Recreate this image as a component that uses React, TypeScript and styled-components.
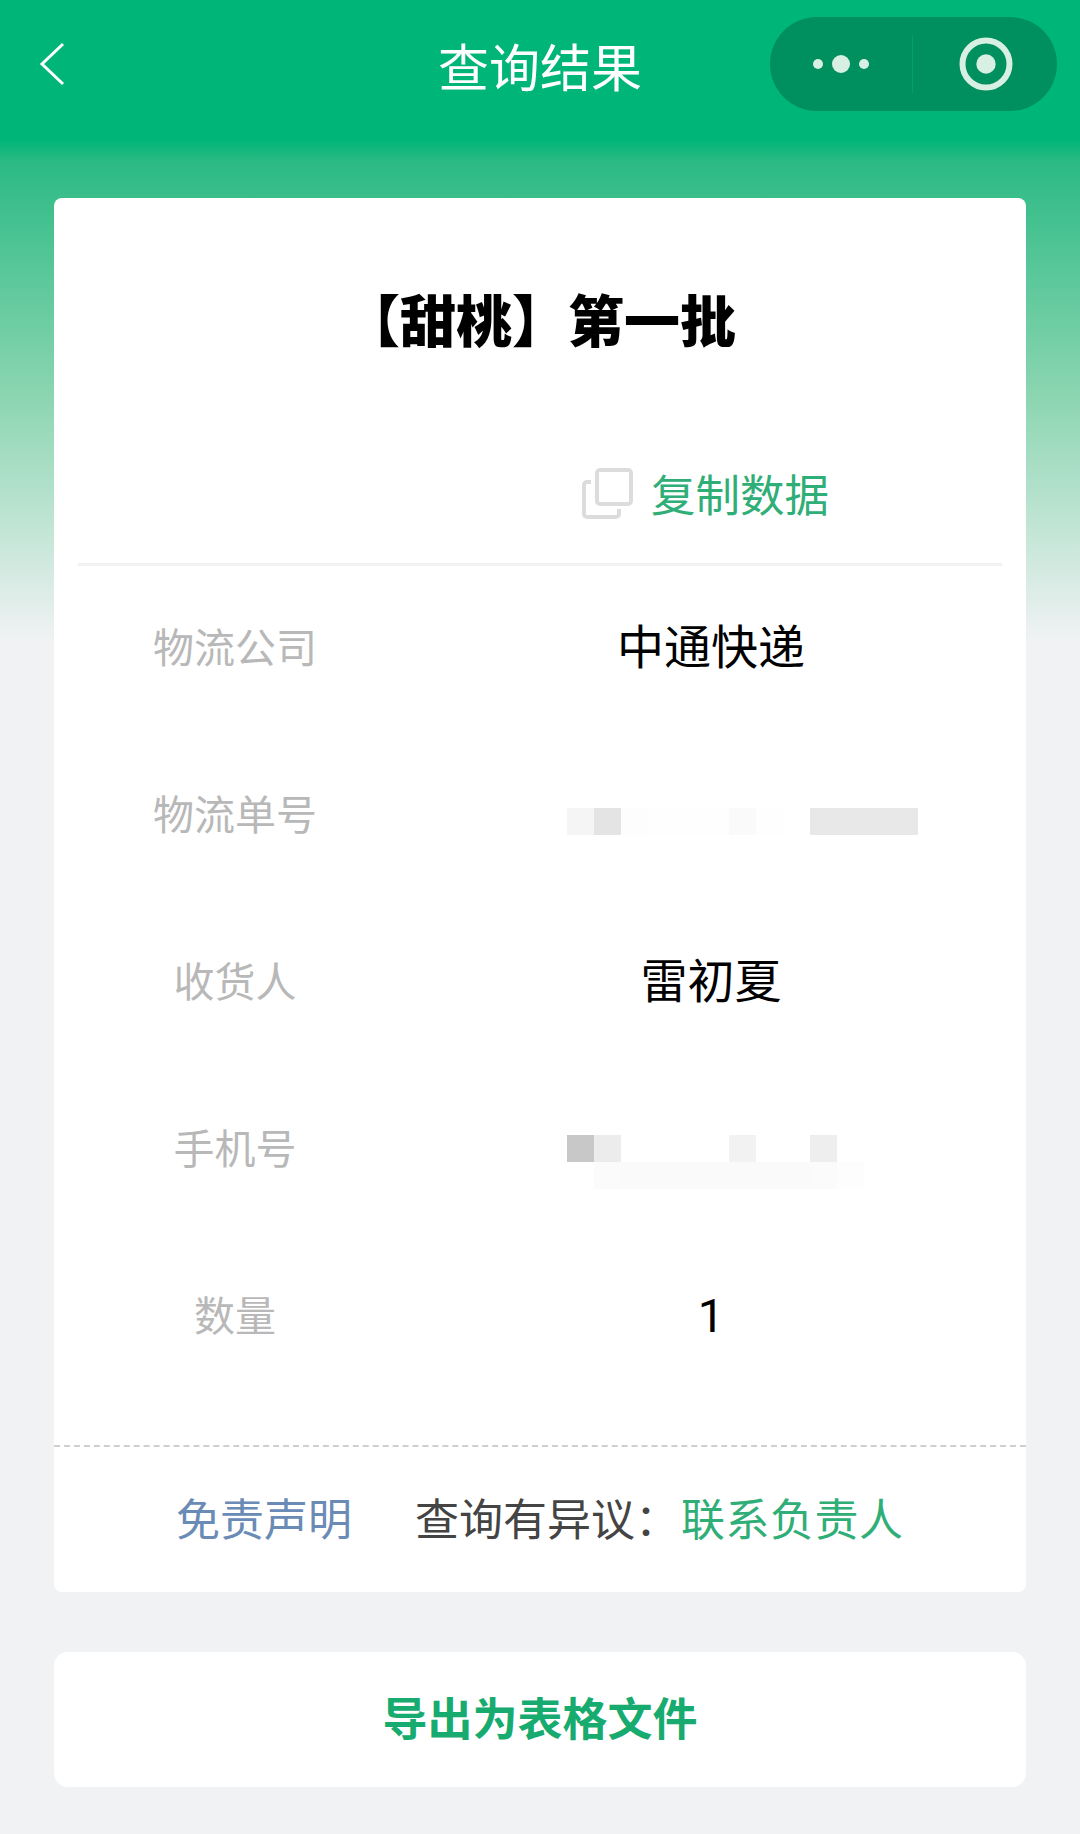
import React from "react";
import styled, { createGlobalStyle } from "styled-components";

const GlobalStyle = createGlobalStyle`
  html, body {
    margin: 0;
    padding: 0;
    background: #f0f2f4;
  }
  * {
    box-sizing: border-box;
  }
`;

const Page = styled.div`
  width: 1080px;
  height: 1834px;
  overflow: hidden;
  font-family: "Noto Sans CJK SC", "Noto Sans", sans-serif;
  background: linear-gradient(
    180deg,
    #00b578 0,
    #00b578 140px,
    #2cba84 162px,
    #8dd6b2 400px,
    #f0f2f4 640px
  );
`;
const NavBar = styled.div`
  display: grid;
  grid-template-columns: 1fr auto 1fr;
  align-items: center;
  height: 128px;
  padding: 0 23px;
`;
const BackButton = styled.div`
  display: flex;
  align-items: center;
  padding-left: 16px;
`;
const NavTitle = styled.div`
  font-size: 51px;
  color: #fff;
  line-height: 1;
  margin-top: 2px;
`;
const Capsule = styled.div`
  justify-self: end;
  display: flex;
  align-items: center;
  width: 287px;
  height: 94px;
  border-radius: 47px;
  background: #008f5f;
`;
const CapsuleCell = styled.div<{ $nudge?: number }>`
  flex: 1;
  display: flex;
  align-items: center;
  justify-content: center;
  padding-left: ${(p) => p.$nudge ?? 0}px;
`;
const CapsuleLine = styled.div`
  width: 1px;
  height: 57px;
  background: #00a06a;
`;
const Card = styled.div`
  margin: 0 54px;
  background: #fff;
  border-radius: 8px;
`;
const MainCard = styled(Card)`
  margin-top: 70px;
  height: 1394px;
  display: flex;
  flex-direction: column;
`;
const CardTitle = styled.div`
  margin-top: 87px;
  height: 66px;
  line-height: 66px;
  text-align: center;
  font-size: 56px;
  font-weight: 900;
  color: #000;
`;
const CopyRow = styled.div`
  margin: 110px 24px 0;
  height: 105px;
  padding: 0 0 40px 504px;
  display: flex;
  align-items: center;
  gap: 17px;
  border-bottom: 3px solid #f2f2f2;
`;
const CopyGlyph = styled.svg`
  margin-top: 2px;
`;
const CopyText = styled.span`
  font-size: 44.5px;
  color: #2fae77;
`;
const Rows = styled.div`
  flex: 1;
  display: flex;
  flex-direction: column;
  gap: 10px;
`;
const Row = styled.div`
  height: 157px;
  display: grid;
  grid-template-columns: 362px 590px;
  align-items: center;
  text-align: center;
`;
const Label = styled.div`
  font-size: 41px;
  color: #b8b8b8;
`;
const Value = styled.div`
  font-family: Roboto, "Noto Sans CJK SC", sans-serif;
  font-size: 47px;
  line-height: 68px;
  margin-top: 7px;
  color: #000;
`;
const Mosaic = styled.div<{ $drop: number }>`
  display: grid;
  grid-template-columns: repeat(13, 27px);
  grid-auto-rows: 27px;
  width: 351px;
  margin-left: 151px;
  margin-top: ${(p) => p.$drop}px;
`;
const MosaicCell = styled.div<{ $shade: string }>`
  background: ${(p) => p.$shade};
`;
const Footer = styled.div`
  height: 147px;
  border-top: 2px dashed #cfcfcf;
  display: flex;
  align-items: center;
  padding: 0 0 6px 122px;
  font-size: 44px;
  white-space: nowrap;
`;
const Disclaimer = styled.span`
  color: #6a8bb5;
  margin-right: 63px;
`;
const Question = styled.span`
  color: #444;
  margin-right: 2px;
`;
const Contact = styled.span`
  color: #2fae77;
  letter-spacing: 0.5px;
`;
const ExportButton = styled(Card)`
  margin-top: 60px;
  height: 135px;
  padding-bottom: 7px;
  border-radius: 14px;
  display: flex;
  align-items: center;
  justify-content: center;
  font-size: 45px;
  font-weight: 700;
  color: #17ab70;
`;

const _ = "#fff";
const trackingCells = [
  "#f5f5f5", "#e4e4e4", "#fdfdfd", "#fefefe", "#fefefe", "#fefefe", "#fafafa", "#fefefe", _, "#e8e8e8", "#e8e8e8", "#e8e8e8", "#e8e8e8",
];
const phoneCells = [
  "#c8c8c8", "#ececec", _, _, _, _, "#f2f2f2", _, _, "#eeeeee", _, _, _,
  _, "#fbfbfb", "#fafafa", "#fafafa", "#fafafa", "#fafafa", "#fafafa", "#fafafa", "#fafafa", "#fbfbfb", "#fdfdfd", _, _,
];

const rows: { label: string; value?: string; cells?: string[]; drop?: number }[] = [
  { label: "物流公司", value: "中通快递" },
  { label: "物流单号", cells: trackingCells, drop: 19 },
  { label: "收货人", value: "雷初夏" },
  { label: "手机号", cells: phoneCells, drop: 32 },
  { label: "数量", value: "1" },
];

const CopyIcon = () => (
  <CopyGlyph width="52" height="52" viewBox="0 0 52 52" fill="none" stroke="#dcdcdc" strokeWidth="4">
    <rect x="15" y="3" width="34" height="34" rx="3" />
    <path d="M9 15H5a3 3 0 0 0-3 3v29a3 3 0 0 0 3 3h29a3 3 0 0 0 3-3v-5" />
  </CopyGlyph>
);

export default function App() {
  return (
    <Page>
      <GlobalStyle />
      <NavBar>
        <BackButton>
          <svg width="28" height="44" viewBox="0 0 28 44" fill="none" stroke="#fff" strokeWidth="3">
            <path d="M24 2 3 22l21 20" />
          </svg>
        </BackButton>
        <NavTitle>查询结果</NavTitle>
        <Capsule>
          <CapsuleCell>
            <svg width="60" height="20" viewBox="0 0 60 20" fill="#d8efe4">
              <circle cx="7" cy="10" r="5" />
              <circle cx="30" cy="10" r="9" />
              <circle cx="53" cy="10" r="5" />
            </svg>
          </CapsuleCell>
          <CapsuleLine />
          <CapsuleCell $nudge={3}>
            <svg width="54" height="54" viewBox="0 0 54 54" fill="none">
              <circle cx="27" cy="27" r="23.5" stroke="#d8efe4" strokeWidth="6" />
              <circle cx="27" cy="27" r="9.7" fill="#d8efe4" />
            </svg>
          </CapsuleCell>
        </Capsule>
      </NavBar>
      <MainCard>
        <CardTitle>【甜桃】第一批</CardTitle>
        <CopyRow>
          <CopyIcon />
          <CopyText>复制数据</CopyText>
        </CopyRow>
        <Rows>
          {rows.map((r) => (
            <Row key={r.label}>
              <Label>{r.label}</Label>
              {r.cells ? (
                <Mosaic $drop={r.drop ?? 0}>
                  {r.cells.map((c, i) => (
                    <MosaicCell key={i} $shade={c} />
                  ))}
                </Mosaic>
              ) : (
                <Value>{r.value}</Value>
              )}
            </Row>
          ))}
        </Rows>
        <Footer>
          <Disclaimer>免责声明</Disclaimer>
          <Question>查询有异议：</Question>
          <Contact>联系负责人</Contact>
        </Footer>
      </MainCard>
      <ExportButton>导出为表格文件</ExportButton>
    </Page>
  );
}
